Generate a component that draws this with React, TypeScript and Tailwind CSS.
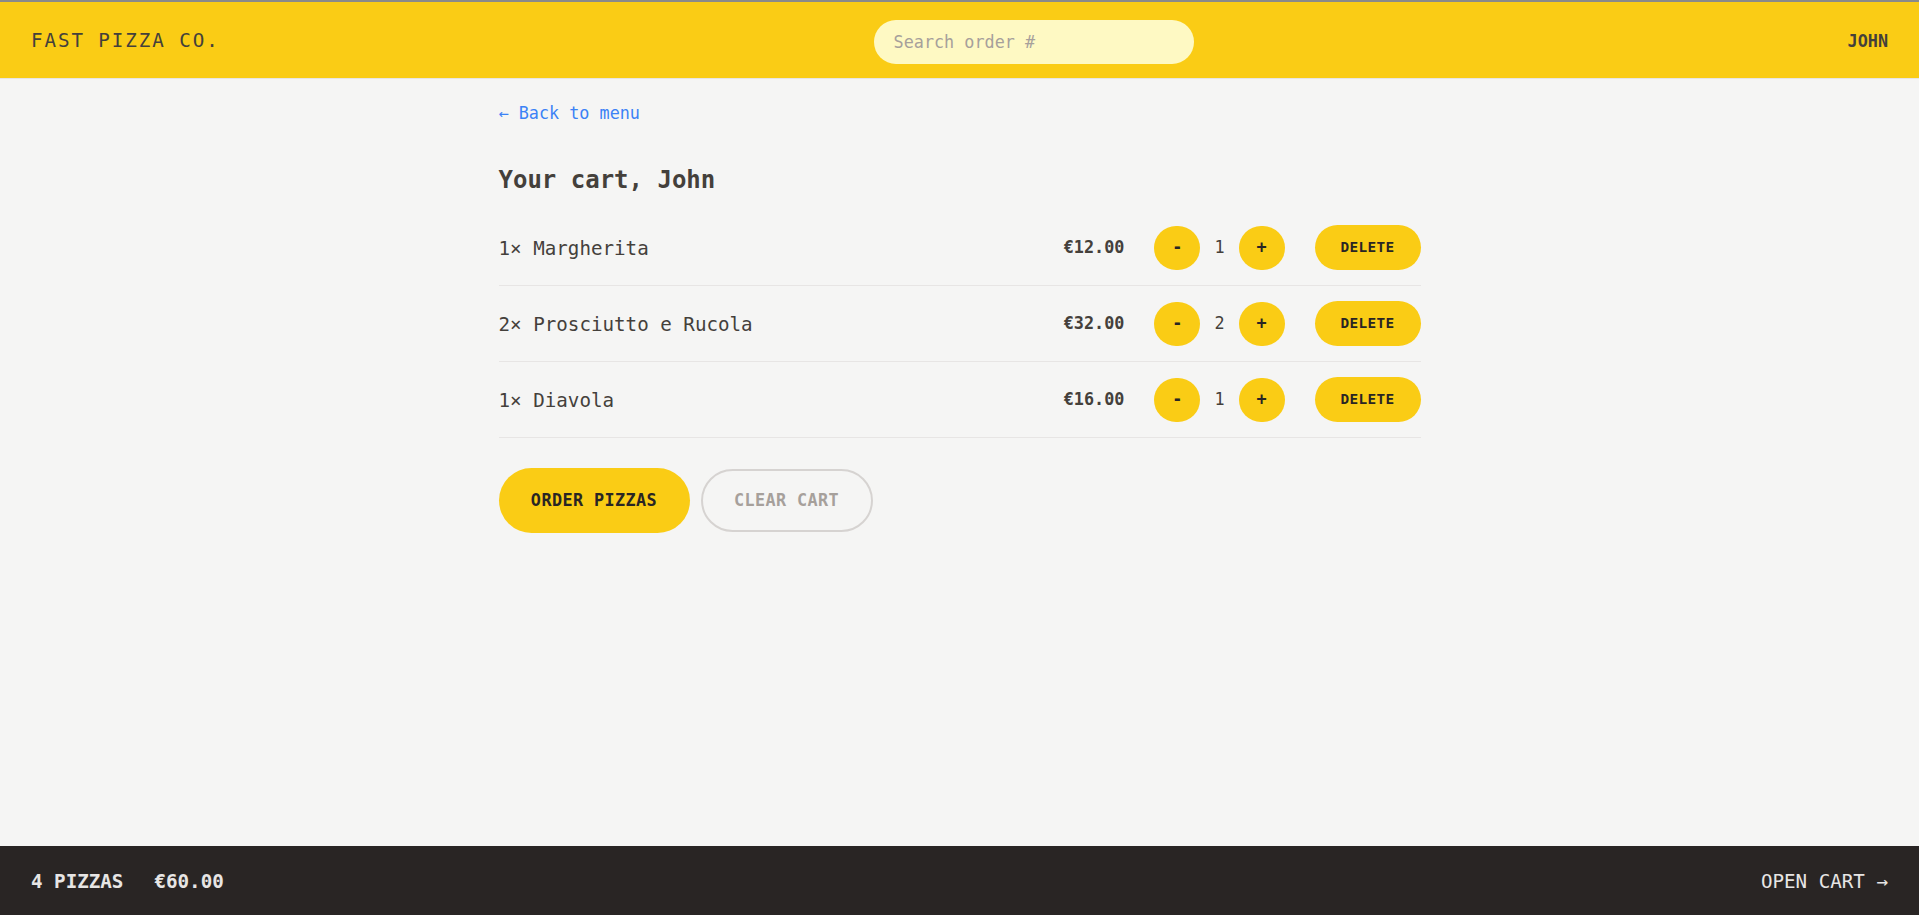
import React from 'react';

const mono = { fontFamily: '"DejaVu Sans Mono", "Liberation Mono", monospace' };

const cart = [
  { id: 1, qty: 1, name: 'Margherita', total: 12 },
  { id: 2, qty: 2, name: 'Prosciutto e Rucola', total: 32 },
  { id: 3, qty: 1, name: 'Diavola', total: 16 },
];

const euro = (n: number) => `€${n.toFixed(2)}`;

function RoundButton({ children }: { children: React.ReactNode }) {
  return (
    <button className="flex h-[44px] w-[46px] items-center justify-center rounded-full bg-[#facc15] text-[16.8px] font-semibold text-stone-800">
      {children}
    </button>
  );
}

function CartRow({ qty, name, total }: { qty: number; name: string; total: number }) {
  return (
    <li className="flex items-center justify-between border-b border-stone-200 py-[15px]">
      <p className="pt-[3px] text-[19.2px] text-stone-700">
        {qty}&times; {name}
      </p>
      <div className="flex items-center gap-[30px]">
        <p className="pt-[1px] text-[16.8px] font-bold text-stone-700">{euro(total)}</p>
        <div className="flex items-center gap-[14px]">
          <RoundButton>-</RoundButton>
          <span className="text-[16.8px] text-stone-700">{qty}</span>
          <RoundButton>+</RoundButton>
        </div>
        <button className="h-[45px] w-[106px] rounded-full bg-[#facc15] text-[14.4px] font-semibold uppercase tracking-wide text-stone-800">
          Delete
        </button>
      </div>
    </li>
  );
}

export default function App() {
  return (
    <div className="grid h-screen grid-rows-[auto_1fr_auto] bg-stone-100" style={mono}>
      {/* Header */}
      <header className="flex h-[79px] items-center justify-between border-t-2 border-b border-t-[#8a8a8a] border-b-stone-200 bg-[#facc15] px-[31px] pt-[3px] uppercase">
        <span className="text-[19.2px] tracking-widest text-stone-700">Fast Pizza Co.</span>
        <input
          placeholder="Search order #"
          className="h-[44px] w-[320px] rounded-full bg-[#fef9c3] px-[20px] text-[16.8px] text-stone-700 outline-none placeholder:text-stone-400"
          style={mono}
        />
        <span className="text-[16.8px] font-semibold text-stone-700">John</span>
      </header>

      {/* Cart */}
      <div className="overflow-hidden">
        <main className="mx-auto w-[922px] pt-[22px]">
          <a className="text-[16.8px] leading-[24px] text-[#3b82f6]" href="#">
            &larr; Back to menu
          </a>
          <h2 className="mt-[37px] text-[24px] leading-[34px] font-semibold text-stone-700">Your cart, John</h2>

          <ul className="mt-[13px]">
            {cart.map(item => (
              <CartRow key={item.id} qty={item.qty} name={item.name} total={item.total} />
            ))}
          </ul>

          <div className="mt-[30px] flex items-center gap-[11px]">
            <button className="h-[65px] w-[191px] rounded-full bg-[#facc15] text-[16.8px] font-semibold uppercase tracking-wide text-stone-800">
              Order pizzas
            </button>
            <button className="h-[63px] w-[172px] rounded-full border-2 border-stone-300 text-[16.8px] font-semibold uppercase tracking-wide text-stone-400">
              Clear cart
            </button>
          </div>
        </main>
      </div>

      {/* Footer */}
      <footer className="flex h-[69px] items-center justify-between bg-stone-800 px-[31px] pt-[4px] text-[19.2px] uppercase text-stone-200">
        <p className="flex gap-[31px] font-semibold">
          <span>4 pizzas</span>
          <span>€60.00</span>
        </p>
        <a href="#">Open cart &rarr;</a>
      </footer>
    </div>
  );
}
